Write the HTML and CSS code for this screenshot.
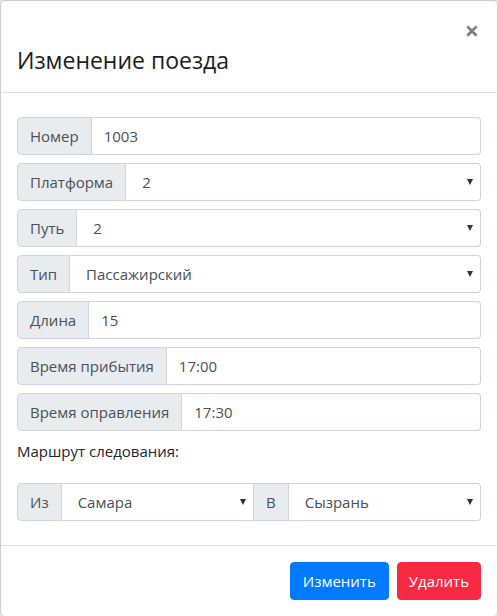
FILE: index.html
```html
<!DOCTYPE html>
<html lang="ru">
<head>
<meta charset="utf-8">
<title>Изменение поезда</title>
<link rel="stylesheet" href="styles.css">
</head>
<body>
<div class="modal">
  <div class="modal-header">
    <button class="close" type="button" aria-label="Закрыть">×</button>
    <h4 class="modal-title">Изменение поезда</h4>
  </div>
  <div class="modal-body">
    <div class="input-group">
      <span class="group-text">Номер</span>
      <input class="form-control" type="text" value="1003">
    </div>
    <div class="input-group">
      <span class="group-text">Платформа</span>
      <div class="select-wrap"><select class="form-select"><option>2</option></select></div>
    </div>
    <div class="input-group">
      <span class="group-text">Путь</span>
      <div class="select-wrap"><select class="form-select"><option>2</option></select></div>
    </div>
    <div class="input-group">
      <span class="group-text">Тип</span>
      <div class="select-wrap"><select class="form-select"><option>Пассажирский</option></select></div>
    </div>
    <div class="input-group">
      <span class="group-text">Длина</span>
      <input class="form-control" type="text" value="15">
    </div>
    <div class="input-group">
      <span class="group-text">Время прибытия</span>
      <input class="form-control" type="text" value="17:00">
    </div>
    <div class="input-group">
      <span class="group-text">Время оправления</span>
      <input class="form-control" type="text" value="17:30">
    </div>
    <label class="route-label">Маршрут следования:</label>
    <div class="input-group">
      <span class="group-text">Из</span>
      <div class="select-wrap mid"><select class="form-select"><option>Самара</option></select></div>
      <span class="group-text mid">В</span>
      <div class="select-wrap"><select class="form-select"><option>Сызрань</option></select></div>
    </div>
  </div>
  <div class="modal-footer">
    <button class="btn btn-primary" type="button">Изменить</button>
    <button class="btn btn-danger" type="button">Удалить</button>
  </div>
</div>
</body>
</html>
```
FILE: styles.css
```css
* { box-sizing: border-box; }
html { background: #e9e9e9; }
body {
  margin: 0;
  font-family: "Open Sans", "Noto Sans", sans-serif;
  font-size: 16px;
  line-height: 1.5;
  color: #212529;
}
.modal {
  background: #fff;
  border: 1px solid rgba(0,0,0,.2);
  border-radius: 5px;
  width: 498px;
  overflow: hidden;
}
.modal-header {
  display: flex;
  flex-direction: column;
  padding: 16px 16px 17px;
  border-bottom: 1px solid #dee2e6;
}
.close {
  align-self: flex-end;
  background: none;
  border: 0;
  padding: 0 2px 0 0;
  margin: 0 0 4px 0;
  font-family: "Open Sans", sans-serif;
  font-size: 25px;
  font-weight: 700;
  line-height: 26px;
  height: 24px;
  color: #000;
  opacity: .5;
}
.modal-title {
  margin: 0;
  font-size: 23px;
  font-weight: 500;
  line-height: 30px;
  color: #1b1e21;
}
.modal-body {
  padding: 24px 16px 16px;
}
.input-group {
  display: flex;
  height: 38px;
  margin-bottom: 8px;
}
.group-text {
  display: flex;
  align-items: center;
  padding: 0 12px;
  font-size: 15px;
  color: #495057;
  background: #e9ecef;
  border: 1px solid #ced4da;
  border-radius: 4px 0 0 4px;
  white-space: nowrap;
}
.group-text.mid {
  border-radius: 0;
  border-left: 0;
}
.form-control {
  flex: 1;
  min-width: 0;
  height: 38px;
  padding: 0 12px;
  font-family: inherit;
  font-size: 15px;
  color: #495057;
  background: #fff;
  border: 1px solid #ced4da;
  border-left: 0;
  border-radius: 0 4px 4px 0;
  outline: none;
}
.select-wrap {
  flex: 1;
  min-width: 0;
  position: relative;
}
.select-wrap::after {
  content: "";
  position: absolute;
  right: 8px;
  top: 16px;
  border-left: 3.5px solid transparent;
  border-right: 3.5px solid transparent;
  border-top: 6px solid #333;
  pointer-events: none;
}
.form-select {
  appearance: none;
  -webkit-appearance: none;
  width: 100%;
  height: 38px;
  padding: 0 24px 0 16px;
  font-family: inherit;
  font-size: 15px;
  color: #495057;
  background: #fff;
  border: 1px solid #ced4da;
  border-left: 0;
  border-radius: 0 4px 4px 0;
  outline: none;
}
.select-wrap.mid .form-select {
  border-radius: 0;
}
.route-label {
  display: block;
  font-size: 15px;
  line-height: 24px;
  margin-bottom: 20px;
}
.modal-footer {
  display: flex;
  justify-content: flex-end;
  gap: 8px;
  padding: 16px 16px;
  border-top: 1px solid #dee2e6;
}
.btn {
  height: 38px;
  padding: 0 12px;
  font-family: inherit;
  font-size: 15px;
  border: 1px solid transparent;
  border-radius: 4px;
  color: #fff;
}
.btn-primary { background: #007bff; border-color: #007bff; }
.btn-danger { background: #f82a42; border-color: #f82a42; padding: 0 11px; }
```
